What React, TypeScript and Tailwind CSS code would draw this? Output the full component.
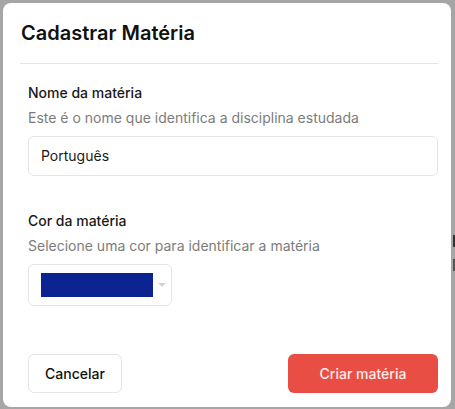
import React from "react";

export default function App() {
  return (
    <div
      className="flex h-[409px] w-[455px] overflow-hidden bg-[#a6a6a6] pl-[3px] pt-[3px]"
      style={{ fontFamily: "Inter, 'Noto Sans', sans-serif" }}
    >
      <div className="flex h-[404px] w-[448px] flex-col rounded-lg bg-white pl-[17px] pr-[13px]">
        <h2 className="ml-[1px] mt-[16px] text-[20px] leading-[28px] font-semibold text-[#111]">
          Cadastrar Matéria
        </h2>
        <div className="mt-[16px] h-px bg-[#e4e4e4]" />

        <div className="flex flex-1 flex-col pl-[8px]">
          <label className="mt-[19px] text-sm leading-5 font-medium text-[#1a1a1a]">
            Nome da matéria
          </label>
          <p className="mt-[5px] text-sm leading-5 text-[#7c7c7c]">
            Este é o nome que identifica a disciplina estudada
          </p>
          <div className="mt-[8px] flex h-[40px] items-center rounded-md border border-[#e5e5e5] px-[12px] text-sm text-[#1a1a1a]">
            Português
          </div>

          <label className="mt-[35px] text-sm leading-5 font-medium text-[#1a1a1a]">
            Cor da matéria
          </label>
          <p className="mt-[5px] text-sm leading-5 text-[#7c7c7c]">
            Selecione uma cor para identificar a matéria
          </p>
          <div className="mt-[8px] flex h-[42px] w-[144px] items-center rounded-md border border-[#e5e5e5] pl-[12px]">
            <div className="h-[24px] w-[112px] bg-[#0c2492]" />
            <svg width="8" height="5" viewBox="0 0 8 5" className="ml-[5px]">
              <path d="M0 0 L8 0 L4 4 Z" fill="#d4d4d4" />
            </svg>
          </div>

          <div className="mt-[48px] flex items-center justify-between">
            <button className="h-[39px] w-[94px] rounded-md border border-[#e5e5e5] bg-white text-sm font-medium text-[#111]">
              Cancelar
            </button>
            <button className="h-[39px] w-[150px] rounded-md bg-[#e94e45] text-sm font-medium text-[#fdeceb]">
              Criar matéria
            </button>
          </div>
        </div>
      </div>
      <div className="flex flex-col pl-[2px]">
        <div className="mt-[232px] h-[12px] w-[2px] bg-[#333]" />
        <div className="mt-[12px] h-[12px] w-[2px] bg-[#555]" />
      </div>
    </div>
  );
}
